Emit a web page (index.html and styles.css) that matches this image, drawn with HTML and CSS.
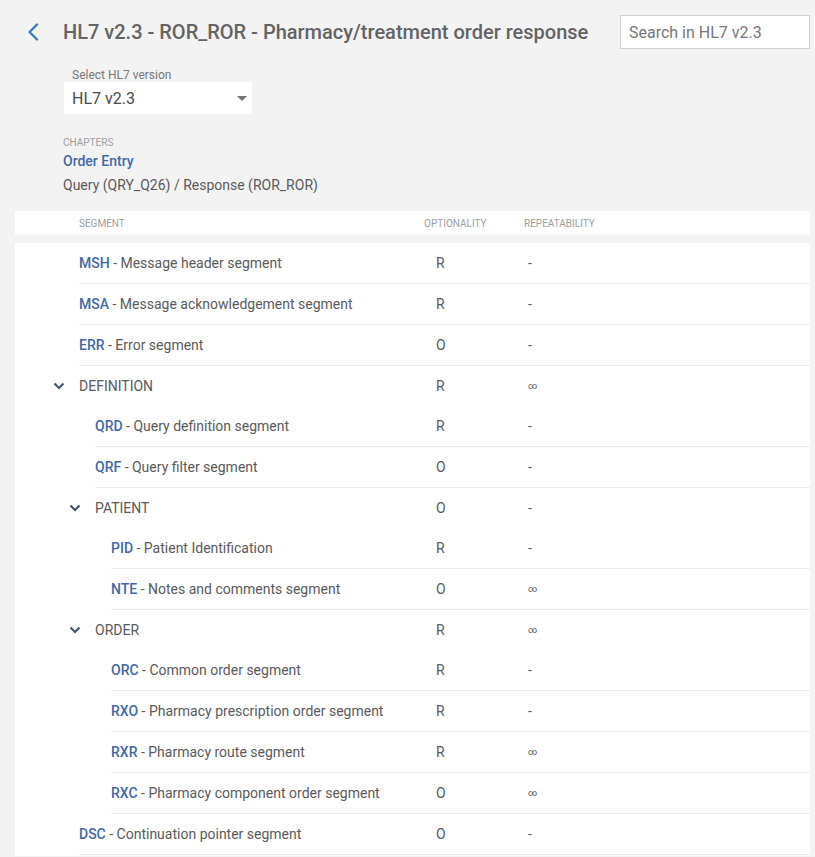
FILE: index.html
```html
<!DOCTYPE html>
<html>
<head>
<meta charset="utf-8">
<link rel="stylesheet" href="styles.css">
</head>
<body>
<header class="topbar">
  <svg class="back" width="14" height="18" viewBox="0 0 14 18"><path d="M11 1.5 L3.5 9 L11 16.5" fill="none" stroke="#3a74c0" stroke-width="2.2" stroke-linecap="round" stroke-linejoin="round"/></svg>
  <h1 class="title">HL7 v2.3 - ROR_ROR - Pharmacy/treatment order response</h1>
  <div class="search">Search in HL7 v2.3</div>
</header>

<section class="version">
  <div class="version-label">Select HL7 version</div>
  <div class="select">
    <span>HL7 v2.3</span>
    <svg width="10" height="5" viewBox="0 0 10 5"><path d="M0 0 H10 L5 5 Z" fill="#757575"/></svg>
  </div>
</section>

<section class="chapters">
  <div class="chapters-label">CHAPTERS</div>
  <div class="chapter-link">Order Entry</div>
  <div class="chapter-sub">Query (QRY_Q26) / Response (ROR_ROR)</div>
</section>

<section class="table">
  <div class="thead">
    <div class="th seg">SEGMENT</div>
    <div class="th">OPTIONALITY</div>
    <div class="th">REPEATABILITY</div>
  </div>
  <div class="tbody">
    <div class="row leaf l0"><div class="seg"><b>MSH</b>&nbsp;- Message header segment</div><div class="opt">R</div><div class="rep">-</div></div>
    <div class="row leaf l0"><div class="seg"><b>MSA</b>&nbsp;- Message acknowledgement segment</div><div class="opt">R</div><div class="rep">-</div></div>
    <div class="row leaf l0"><div class="seg"><b>ERR</b>&nbsp;- Error segment</div><div class="opt">O</div><div class="rep">-</div></div>
    <div class="row group l0"><div class="seg"><svg class="chev" width="12" height="8" viewBox="0 0 12 8"><path d="M1.5 1.5 L6 6 L10.5 1.5" fill="none" stroke="#475569" stroke-width="2.2"/></svg>DEFINITION</div><div class="opt">R</div><div class="rep inf">∞</div></div>
    <div class="row leaf l1"><div class="seg"><b>QRD</b>&nbsp;- Query definition segment</div><div class="opt">R</div><div class="rep">-</div></div>
    <div class="row leaf l1"><div class="seg"><b>QRF</b>&nbsp;- Query filter segment</div><div class="opt">O</div><div class="rep">-</div></div>
    <div class="row group l1"><div class="seg"><svg class="chev" width="12" height="8" viewBox="0 0 12 8"><path d="M1.5 1.5 L6 6 L10.5 1.5" fill="none" stroke="#475569" stroke-width="2.2"/></svg>PATIENT</div><div class="opt">O</div><div class="rep">-</div></div>
    <div class="row leaf l2"><div class="seg"><b>PID</b>&nbsp;- Patient Identification</div><div class="opt">R</div><div class="rep">-</div></div>
    <div class="row leaf l2"><div class="seg"><b>NTE</b>&nbsp;- Notes and comments segment</div><div class="opt">O</div><div class="rep inf">∞</div></div>
    <div class="row group l1"><div class="seg"><svg class="chev" width="12" height="8" viewBox="0 0 12 8"><path d="M1.5 1.5 L6 6 L10.5 1.5" fill="none" stroke="#475569" stroke-width="2.2"/></svg>ORDER</div><div class="opt">R</div><div class="rep inf">∞</div></div>
    <div class="row leaf l2"><div class="seg"><b>ORC</b>&nbsp;- Common order segment</div><div class="opt">R</div><div class="rep">-</div></div>
    <div class="row leaf l2"><div class="seg"><b>RXO</b>&nbsp;- Pharmacy prescription order segment</div><div class="opt">R</div><div class="rep">-</div></div>
    <div class="row leaf l2"><div class="seg"><b>RXR</b>&nbsp;- Pharmacy route segment</div><div class="opt">R</div><div class="rep inf">∞</div></div>
    <div class="row leaf l2"><div class="seg"><b>RXC</b>&nbsp;- Pharmacy component order segment</div><div class="opt">O</div><div class="rep inf">∞</div></div>
    <div class="row leaf l0"><div class="seg"><b>DSC</b>&nbsp;- Continuation pointer segment</div><div class="opt">O</div><div class="rep">-</div></div>
  </div>
</section>
</body>
</html>
```

FILE: styles.css
```css
* { box-sizing: border-box; }
html, body { margin: 0; padding: 0; }
body {
  background: #f3f3f3;
  font-family: Roboto, "Liberation Sans", sans-serif;
  color: #5a5a5a;
  width: 815px;
  height: 857px;
  overflow: hidden;
}

.topbar {
  display: flex;
  align-items: center;
  padding: 15px 5px 0 26px;
  height: 49px;
}
.back { flex: none; margin-right: 23px; }
.title {
  margin: 0;
  font-size: 20px;
  font-weight: 500;
  line-height: 24px;
  color: #636363;
  white-space: nowrap;
}
.search {
  margin-left: auto;
  width: 190px;
  height: 34px;
  background: #fff;
  border: 1px solid #cfcfcf;
  padding: 0 8px;
  display: flex;
  align-items: center;
  font-size: 16px;
  color: #777;
}

.version { padding-left: 64px; margin-top: 19px; }
.version-label {
  padding-left: 8px;
  font-size: 12px;
  line-height: 14px;
  color: #777;
}
.select {
  width: 188px;
  height: 32px;
  background: #fff;
  display: flex;
  align-items: center;
  justify-content: space-between;
  padding: 0 5px 0 8px;
  font-size: 16px;
  color: #4a4a4a;
}

.chapters { padding-left: 63px; margin-top: 23px; }
.chapters-label {
  font-size: 10px;
  line-height: 12px;
  color: #9e9e9e;
}
.chapter-link {
  font-size: 14px;
  line-height: 24px;
  font-weight: 500;
  color: #4468a6;
}
.chapter-sub {
  font-size: 14px;
  line-height: 24px;
  color: #5a5a5a;
}

.table { margin: 14px 5px 0 15px; }
.thead {
  display: grid;
  grid-template-columns: 409px 100px 1fr;
  height: 24px;
  align-items: center;
  background: #fff;
}
.th {
  font-size: 10px;
  color: #9e9e9e;
  text-transform: uppercase;
}
.th.seg { padding-left: 64px; }

.tbody {
  margin-top: 8px;
  background: #fff;
  padding-bottom: 1px;
}
.row {
  display: grid;
  align-items: center;
  height: 40px;
  font-size: 14px;
  line-height: 18px;
  padding-bottom: 1px;
}
.row.leaf { height: 41px; border-bottom: 1px solid #ededed; }
.row.l0 { margin-left: 64px; grid-template-columns: 345px 100px 1fr; }
.row.l1 { margin-left: 80px; grid-template-columns: 329px 100px 1fr; }
.row.l2 { margin-left: 96px; grid-template-columns: 313px 100px 1fr; }

.seg { display: flex; align-items: center; white-space: nowrap; }
.seg b { font-weight: 500; color: #4468a6; }
.chev { flex: none; margin-left: -26px; margin-right: 14px; }
.opt { padding-left: 12px; color: #5a5a5a; }
.rep { padding-left: 4px; color: #5a5a5a; }
.rep.inf { font-size: 9px; line-height: 18px; }
```
